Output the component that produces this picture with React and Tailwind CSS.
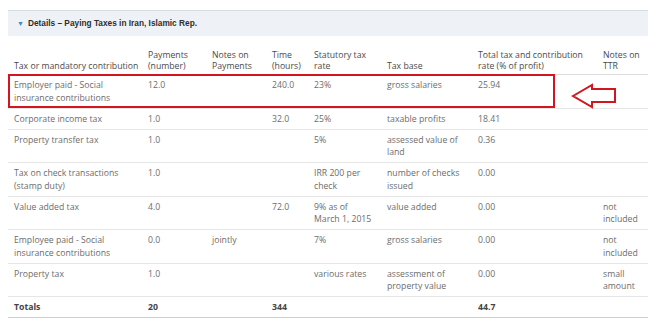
import React from 'react';

const cols = [134, 64, 60, 42, 73, 91, 125, 51];

const rows = [
  { name: ['Employer paid - Social', 'insurance contributions'], pay: '12.0', notes: '', time: '240.0', rate: ['23%'], base: ['gross salaries'], total: '25.94', ttr: [] },
  { name: ['Corporate income tax'], pay: '1.0', notes: '', time: '32.0', rate: ['25%'], base: ['taxable profits'], total: '18.41', ttr: [] },
  { name: ['Property transfer tax'], pay: '1.0', notes: '', time: '', rate: ['5%'], base: ['assessed value of', 'land'], total: '0.36', ttr: [] },
  { name: ['Tax on check transactions', '(stamp duty)'], pay: '1.0', notes: '', time: '', rate: ['IRR 200 per', 'check'], base: ['number of checks', 'issued'], total: '0.00', ttr: [] },
  { name: ['Value added tax'], pay: '4.0', notes: '', time: '72.0', rate: ['9% as of', 'March 1, 2015'], base: ['value added'], total: '0.00', ttr: ['not', 'included'] },
  { name: ['Employee paid - Social', 'insurance contributions'], pay: '0.0', notes: 'jointly', time: '', rate: ['7%'], base: ['gross salaries'], total: '0.00', ttr: ['not', 'included'] },
  { name: ['Property tax'], pay: '1.0', notes: '', time: '', rate: ['various rates'], base: ['assessment of', 'property value'], total: '0.00', ttr: ['small', 'amount'] },
];

function Lines({ items }) {
  return items.map((t, i) => (
    <React.Fragment key={i}>
      {i > 0 && <br />}
      {t}
    </React.Fragment>
  ));
}

export default function App() {
  const head = [
    ['Tax or mandatory contribution'],
    ['Payments', '(number)'],
    ['Notes on', 'Payments'],
    ['Time', '(hours)'],
    ['Statutory tax', 'rate'],
    ['Tax base'],
    ['Total tax and contribution', 'rate (% of profit)'],
    ['Notes on', 'TTR'],
  ];

  return (
    <div
      className="relative w-[656px] h-[329px] bg-white pt-[10px] px-[8px] overflow-hidden"
      style={{ fontFamily: '"Open Sans", "Liberation Sans", sans-serif' }}
    >
      <div className="h-[26px] border-t border-[#d6dce2] bg-[#eef2f6] flex items-center pl-[9px] gap-[4px]">
        <span className="text-[#3a8cbf] text-[7px] leading-none">▼</span>
        <span
          className="text-[8.3px] font-bold text-[#2e2e2e]"
          style={{ fontFamily: '"Liberation Sans", Arial, sans-serif' }}
        >
          Details – Paying Taxes in Iran, Islamic Rep.
        </span>
      </div>

      <table className="table-fixed border-collapse w-[640px] text-[8.7px]">
        <colgroup>
          {cols.map((w, i) => (
            <col key={i} style={{ width: w }} />
          ))}
        </colgroup>
        <thead>
          <tr className="border-b border-[#dcdcdc]">
            {head.map((h, i) => (
              <th
                key={i}
                className="text-left align-bottom font-normal text-[#4a4a4a] leading-[11px] pl-[6px] pt-[14px] pb-[2px]"
              >
                <Lines items={h} />
              </th>
            ))}
          </tr>
        </thead>
        <tbody className="text-[#6c6c6c] leading-[12.5px]">
          {rows.map((r, i) => (
            <tr key={i} className="border-b border-[#e6e6e6]">
              <td className="align-top pl-[6px] pt-[4px] pb-[3.5px]"><Lines items={r.name} /></td>
              <td className="align-top pl-[6px] pt-[4px] pb-[3.5px]">{r.pay}</td>
              <td className="align-top pl-[6px] pt-[4px] pb-[3.5px]">{r.notes}</td>
              <td className="align-top pl-[6px] pt-[4px] pb-[3.5px]">{r.time}</td>
              <td className="align-top pl-[6px] pt-[4px] pb-[3.5px]"><Lines items={r.rate} /></td>
              <td className="align-top pl-[6px] pt-[4px] pb-[3.5px]"><Lines items={r.base} /></td>
              <td className="align-top pl-[6px] pt-[4px] pb-[3.5px]">{r.total}</td>
              <td className="align-top pl-[6px] pt-[4px] pb-[3.5px]"><Lines items={r.ttr} /></td>
            </tr>
          ))}
          <tr className="border-b border-[#cfcfcf] font-bold text-[#444]">
            <td className="pl-[6px] pt-[4px] pb-[3.5px]">Totals</td>
            <td className="pl-[6px] pt-[4px] pb-[3.5px]">20</td>
            <td className="pl-[6px] pt-[4px] pb-[3.5px]"></td>
            <td className="pl-[6px] pt-[4px] pb-[3.5px]">344</td>
            <td className="pl-[6px] pt-[4px] pb-[3.5px]"></td>
            <td className="pl-[6px] pt-[4px] pb-[3.5px]"></td>
            <td className="pl-[6px] pt-[4px] pb-[3.5px]">44.7</td>
            <td className="pl-[6px] pt-[4px] pb-[3.5px]"></td>
          </tr>
        </tbody>
      </table>

      {/* highlight box over the first row */}
      <div className="absolute left-[8px] top-[74px] w-[547px] h-[34px] border-2 border-[#d4141e]" />

      {/* arrow pointing at the highlighted row */}
      <svg className="absolute left-[570px] top-[82px]" width="50" height="28" viewBox="0 0 50 28">
        <path
          d="M3 14 L22 3 L22 7 L45 7 L45 20 L22 20 L22 25 Z"
          fill="none"
          stroke="#d4141e"
          strokeWidth="2"
          strokeLinejoin="miter"
        />
      </svg>
    </div>
  );
}
